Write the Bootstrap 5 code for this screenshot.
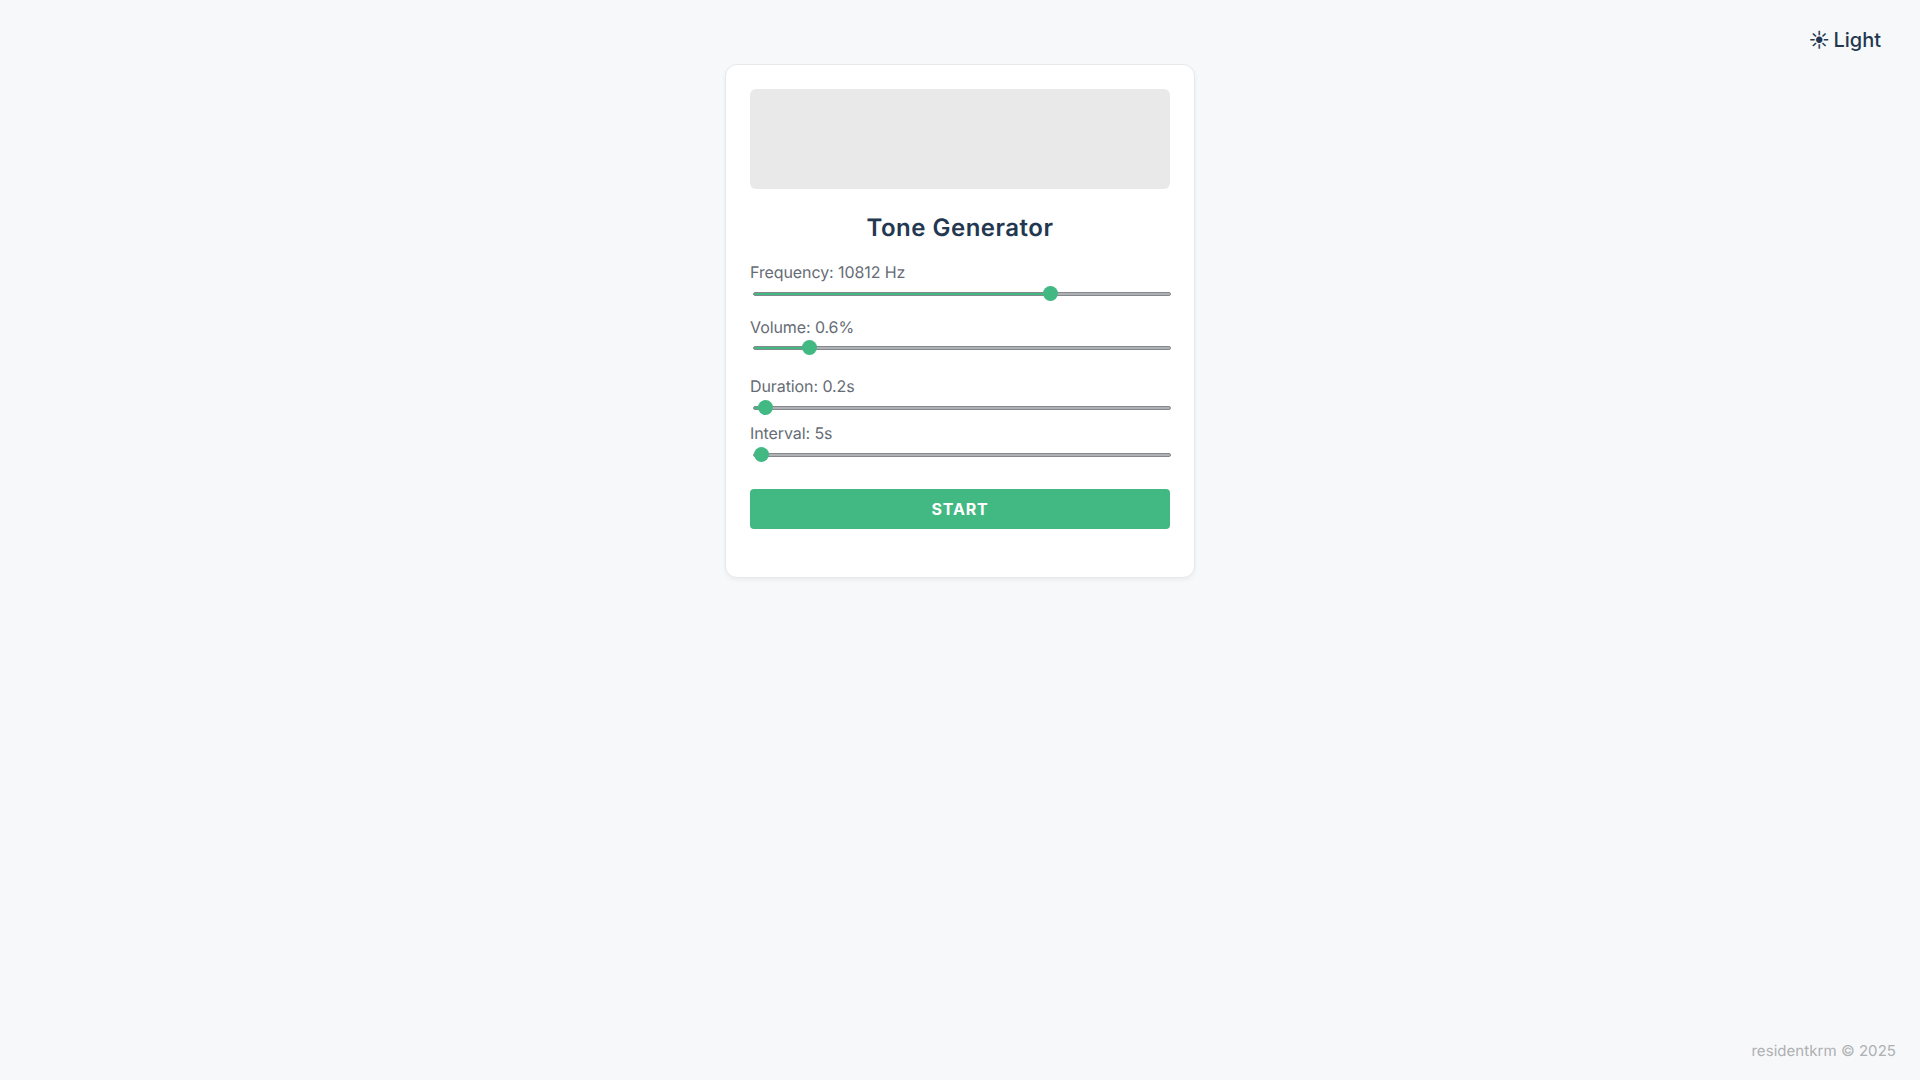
<!DOCTYPE html>
<html lang="en">
<head>
<meta charset="utf-8">
<title>Tone Generator</title>
<link href="https://cdn.jsdelivr.net/npm/bootstrap@5.3.0/dist/css/bootstrap.min.css" rel="stylesheet">
<style>
html, body { height: 100%; }
body { background: #f7f8fa; font-family: Inter, "Liberation Sans", sans-serif; color: #233850; text-rendering: geometricPrecision; }
.page-shell { min-height: 100vh; padding-top: 64px; }
.tone-card { width: 470px; height: 514px; padding: 24px 24px 48px; background: #fff; border: 1px solid #e6e8eb; border-radius: 12px; box-shadow: 0 2px 4px rgba(0,0,0,.05); }
.ad-slot { height: 100px; background: #e9e9e9; border-radius: 6px; }
.tone-title { font-size: 24px; font-weight: 600; line-height: 29px; letter-spacing: .5px; color: #233850; margin: 24px 0 18px; }
.tone-label { display: block; font-size: 16px; line-height: 24px; letter-spacing: -.09px; color: #666c75; margin: 0; }
.tone-label-tight { line-height: 22px; }
.tone-range { -webkit-appearance: none; appearance: none; display: block; width: calc(100% - 2px); height: 16px; margin: 2px 3px; background: transparent; }
.tone-range::-webkit-slider-runnable-track { height: 4px; border-radius: 2px; border: 1px solid #85888c; background: linear-gradient(to right, #42b883 var(--fill), #aeb1b5 var(--fill)); }
.tone-range::-webkit-slider-thumb { -webkit-appearance: none; width: 15px; height: 15px; margin-top: -7px; margin-left: -.3px; border-radius: 50%; background: #42b883; border: 0; }
.gap-a { margin-bottom: 12px; }
.gap-b { margin-bottom: 16px; }
.gap-c { margin-bottom: 3px; }
.gap-d { margin-bottom: 24px; }
.start-btn { height: 40px; padding: 0; background: #42b883; border: 0; border-radius: 4px; color: #fff; font-size: 16px; font-weight: 700; letter-spacing: .8px; }
.theme-btn { position: absolute; top: 26px; right: 39px; padding: 0; background: none; border: 0; color: #233850; font-size: 20px; line-height: 28px; font-weight: 500; }
.sun-glyph { margin-right: -1.8px; }
.credit { position: absolute; right: 24px; bottom: 19px; font-size: 15px; letter-spacing: .05px; line-height: 20px; color: #aeb0b2; }
</style>
</head>
<body class="position-relative">
<button type="button" class="theme-btn"><span class="sun-glyph">☀</span> Light</button>
<main class="page-shell d-flex justify-content-center align-items-start">
  <section class="tone-card d-flex flex-column">
    <div class="ad-slot"></div>
    <h1 class="tone-title text-center">Tone Generator</h1>
    <div class="gap-a">
      <label class="tone-label">Frequency: 10812 Hz</label>
      <input class="tone-range" type="range" min="20" max="15000" value="10812" style="--fill:72%">
    </div>
    <div class="gap-b">
      <label class="tone-label tone-label-tight">Volume: 0.6%</label>
      <input class="tone-range" type="range" min="0" max="5" step="0.1" value="0.6" style="--fill:13%">
    </div>
    <div class="gap-c">
      <label class="tone-label">Duration: 0.2s</label>
      <input class="tone-range" type="range" min="0.1" max="10" step="0.1" value="0.2" style="--fill:2%">
    </div>
    <div class="gap-d">
      <label class="tone-label">Interval: 5s</label>
      <input class="tone-range" type="range" min="5" max="60" value="5" style="--fill:0%">
    </div>
    <button type="button" class="btn start-btn w-100">START</button>
  </section>
</main>
<footer class="credit">residentkrm © 2025</footer>
<script src="https://cdn.jsdelivr.net/npm/bootstrap@5.3.0/dist/js/bootstrap.bundle.min.js"></script>
</body>
</html>
